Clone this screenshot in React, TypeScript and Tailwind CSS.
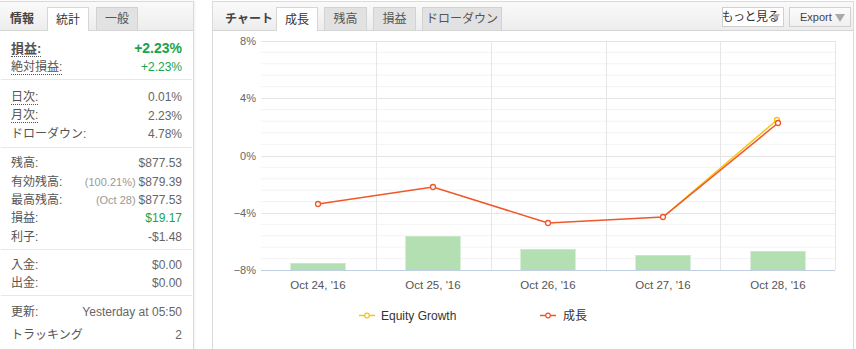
import React from "react";

const F = { fontFamily: '"Liberation Sans", "Noto Sans CJK JP", sans-serif' };

function Row({ label, value, pre, dotted, valueClass }: { label: string; value: string; pre?: string; dotted?: boolean; valueClass?: string }) {
  return (
    <div className="flex items-center justify-between h-[18.3px]">
      <span className={`text-[12px] text-[#555] leading-[14px] ${dotted ? "border-b border-dotted border-[#555]" : ""}`}>{label}</span>
      <span className={`text-[12px] leading-[14px] ${valueClass ?? "text-[#666]"}`}>
        {pre && <span className="text-[#999] mr-[3px] text-[11px]">{pre}</span>}
        {value}
      </span>
    </div>
  );
}

function Sep() {
  return <div className="h-px bg-[#e8e8e8] mx-[1px]" />;
}

const cats = ["Oct 24, '16", "Oct 25, '16", "Oct 26, '16", "Oct 27, '16", "Oct 28, '16"];
const cx = [318, 433, 548, 663, 778];
const red = [204, 187, 223, 217, 123];
const bars = [263, 236, 249, 255, 251];

function Chart() {
  const left = 261, right = 835;
  const majors = [41, 98, 156, 213, 270];
  const minors: number[] = [];
  for (let i = 0; i < 4; i++) {
    for (let j = 1; j < 5; j++) minors.push(majors[i] + ((majors[i + 1] - majors[i]) * j) / 5);
  }
  const vlines = [376, 491, 606, 720];
  const ylabels = ["8%", "4%", "0%", "−4%", "−8%"];
  return (
    <svg width={640} height={318} viewBox="213 31 640 318" className="block" style={F}>
      {minors.map((y, i) => (
        <line key={"m" + i} x1={left} x2={right} y1={y} y2={y} stroke="#f3f3f3" strokeWidth={1} />
      ))}
      {majors.slice(0, 4).map((y, i) => (
        <line key={"M" + i} x1={left} x2={right} y1={y + 0.5} y2={y + 0.5} stroke="#e4e4e4" strokeWidth={1} />
      ))}
      {vlines.map((x, i) => (
        <line key={"v" + i} x1={x + 0.5} x2={x + 0.5} y1={41} y2={270} stroke="#e6e6e6" strokeWidth={1} />
      ))}
      <line x1={right + 0.5} x2={right + 0.5} y1={41} y2={270} stroke="#e6e6e6" />
      {bars.map((t, i) => (
        <g key={"b" + i}>
          <rect x={cx[i] - 27.5} y={t} width={55} height={270 - t} fill="#b3dfb3" />
          <rect x={cx[i] - 27.5} y={t} width={55} height={1} fill="#c8e8c8" />
        </g>
      ))}
      <line x1={left} x2={right} y1={270.5} y2={270.5} stroke="#c0cfe0" strokeWidth={1} />
      {ylabels.map((l, i) => (
        <text key={"y" + i} x={256} y={majors[i] + 4} textAnchor="end" fontSize={11} fill="#666">{l}</text>
      ))}
      {cats.map((c, i) => (
        <text key={"x" + i} x={cx[i]} y={289} textAnchor="middle" fontSize={11.5} fill="#555">{c}</text>
      ))}
      <polyline points={`663,217 777,120`} fill="none" stroke="#f5c518" strokeWidth={1.5} />
      <circle cx={777} cy={120} r={2.5} fill="#fff" stroke="#f5c518" strokeWidth={1.3} />
      <polyline points={cx.map((x, i) => `${x},${red[i]}`).join(" ")} fill="none" stroke="#f0572a" strokeWidth={1.5} />
      {cx.map((x, i) => (
        <circle key={"c" + i} cx={x} cy={red[i]} r={2.5} fill="#fff" stroke="#f0572a" strokeWidth={1.3} />
      ))}
      <line x1={359} x2={375} y1={315.5} y2={315.5} stroke="#f5c518" strokeWidth={1.5} />
      <circle cx={367} cy={315.5} r={2.3} fill="#fff" stroke="#f5c518" strokeWidth={1.2} />
      <text x={381} y={319.5} fontSize={12} fill="#333">Equity Growth</text>
      <line x1={540} x2={556} y1={315.5} y2={315.5} stroke="#f0572a" strokeWidth={1.5} />
      <circle cx={548} cy={315.5} r={2.3} fill="#fff" stroke="#f0572a" strokeWidth={1.2} />
      <text x={563} y={319.5} fontSize={12} fill="#333">成長</text>
    </svg>
  );
}

function Tab({ children, active, w }: { children: React.ReactNode; active?: boolean; w: string }) {
  return (
    <div
      className={`${w} flex items-center justify-center text-[12px] border border-b-0 whitespace-nowrap ${
        active ? "bg-white border-[#d6d6d6] text-[#333] h-[24px] -mb-px" : "bg-[#e2e2e2] border-[#d2d2d2] text-[#555] h-[23px]"
      }`}
    >
      {children}
    </div>
  );
}

export default function App() {
  return (
    <div className="w-[856px] h-[349px] bg-white flex items-start overflow-hidden" style={F}>
      {/* Left panel */}
      <div className="w-[194px] h-[352px] mt-[1px] border border-l-0 border-[#dadada] shadow-[1px_0_2px_rgba(0,0,0,0.06)] flex flex-col">
        <div className="h-[29px] flex items-end bg-gradient-to-b from-[#fafafa] to-[#ededed] border-b border-[#d6d6d6] pl-[10px]">
          <div className="w-[37px] h-[23px] flex items-center text-[12px] font-bold text-[#444]">情報</div>
          <div className="flex items-end gap-[7px]">
            <Tab active w="w-[42px]">統計</Tab>
            <Tab w="w-[42px]">一般</Tab>
          </div>
        </div>
        <div className="px-[11px] pt-[8px]">
          <div className="flex items-center justify-between h-[19px]">
            <span className="text-[13px] font-bold text-[#555] border-b border-dotted border-[#555] leading-[15px]">損益:</span>
            <span className="text-[14px] font-bold text-[#1aa34a]">+2.23%</span>
          </div>
          <Row label="絶対損益:" value="+2.23%" dotted valueClass="text-[#1aa34a]" />
        </div>
        <div className="h-[3px]" />
        <Sep />
        <div className="px-[11px] pt-[8px] pb-[4px]">
          <Row label="日次:" value="0.01%" dotted />
          <Row label="月次:" value="2.23%" dotted />
          <Row label="ドローダウン:" value="4.78%" />
        </div>
        <Sep />
        <div className="px-[11px] pt-[6px] pb-[3px]">
          <Row label="残高:" value="$877.53" />
          <Row label="有効残高:" value="$879.39" pre="(100.21%)" />
          <Row label="最高残高:" value="$877.53" pre="(Oct 28)" />
          <Row label="損益:" value="$19.17" valueClass="text-[#1aa34a]" />
          <Row label="利子:" value="-$1.48" />
        </div>
        <Sep />
        <div className="px-[11px] pt-[6px] pb-[3px]">
          <Row label="入金:" value="$0.00" />
          <Row label="出金:" value="$0.00" />
        </div>
        <Sep />
        <div className="px-[11px] pt-[7px]">
          <Row label="更新:" value="Yesterday at 05:50" />
          <div className="h-[4px]" />
          <Row label="トラッキング" value="2" />
        </div>
      </div>

      {/* Right panel */}
      <div className="ml-[18px] w-[642px] h-[352px] mt-[1px] border border-[#dadada] flex flex-col">
        <div className="h-[29px] flex items-end bg-gradient-to-b from-[#fafafa] to-[#ededed] border-b border-[#d6d6d6] pl-[12px]">
          <div className="w-[51px] h-[23px] flex items-center text-[12px] font-bold text-[#444] whitespace-nowrap">チャート</div>
          <div className="flex gap-[6px] items-end">
            <Tab active w="w-[42px]">成長</Tab>
            <Tab w="w-[43px]">残高</Tab>
            <Tab w="w-[43px]">損益</Tab>
            <Tab w="w-[80px]">ドローダウン</Tab>
          </div>
          <div className="ml-auto flex gap-[5px] self-center mr-[2px] mt-[2px]">
            <div className="h-[20px] w-[62px] border border-[#d0d0d0] bg-white flex items-center justify-end pr-[4px] text-[12px] text-[#333] relative whitespace-nowrap overflow-hidden">
              <span className="tracking-[-0.5px]">もっと見る</span>
              <span className="absolute right-[3px] top-[6px] w-0 h-0 border-l-[4px] border-r-[4px] border-t-[7px] border-l-transparent border-r-transparent border-t-[#aaa] opacity-80" />
            </div>
            <div className="h-[20px] w-[62px] border border-[#d0d0d0] bg-gradient-to-b from-[#fbfbfb] to-[#f0f0f0] flex items-center pl-[10px] text-[11px] text-[#444] relative whitespace-nowrap">
              Export
              <span className="absolute right-[5px] top-[6px] w-0 h-0 border-l-[5px] border-r-[5px] border-t-[8px] border-l-transparent border-r-transparent border-t-[#aaa]" />
            </div>
          </div>
        </div>
        <Chart />
      </div>
    </div>
  );
}
